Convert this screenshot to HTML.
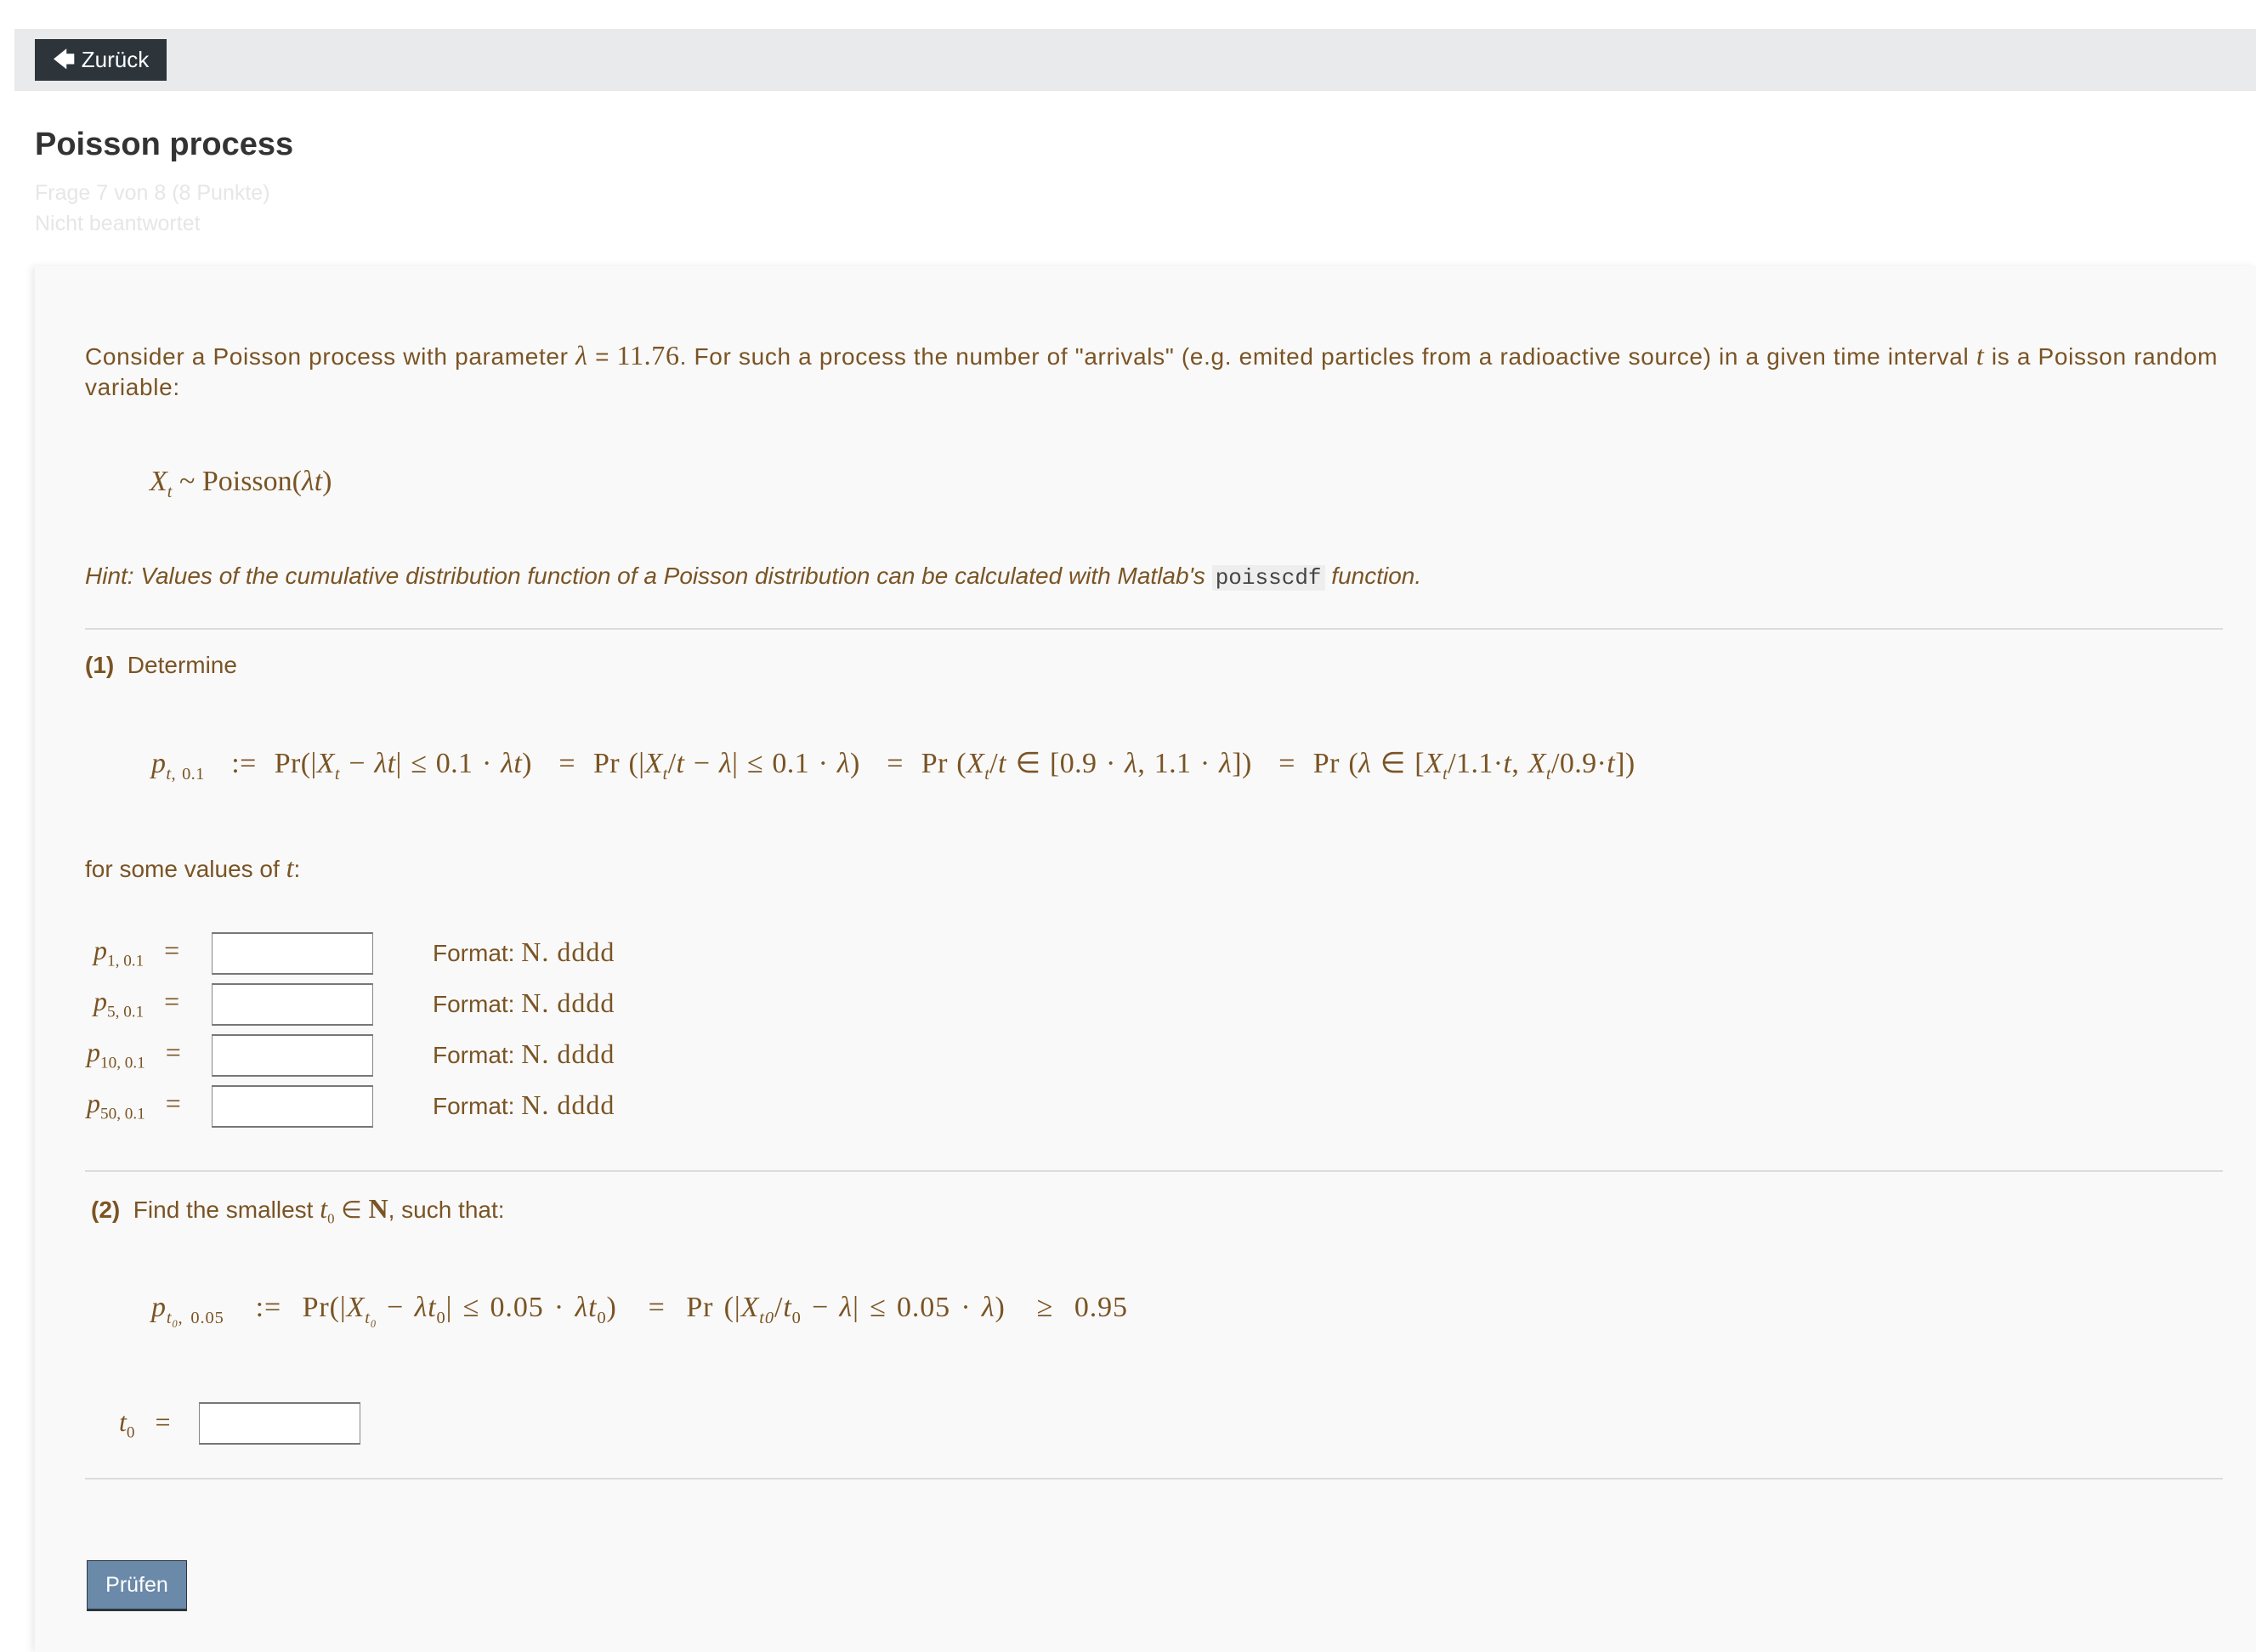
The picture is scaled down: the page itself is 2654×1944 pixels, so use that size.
<!DOCTYPE html>
<html><head><meta charset="utf-8"><style>
body{margin:0;width:2654px;height:1944px;background:#fff;position:relative;overflow:hidden;font-family:"Liberation Sans",sans-serif;color:#7a5424}
.a{position:absolute;white-space:nowrap}
.m{font-family:"Liberation Serif",serif}
i.m{font-style:italic}
.bar{position:absolute;left:17px;top:34px;width:2637px;height:73px;background:#e9eaec}
.btn{position:absolute;left:41px;top:46px;width:155px;height:49px;background:#2d353b;color:#fff;font-size:26px;line-height:49px;text-align:center}
.card{position:absolute;left:41px;top:313px;width:2613px;height:1631px;background:#f9f9f9;box-shadow:-4px 0 8px rgba(0,0,0,.08)}
.hr{position:absolute;left:100px;width:2515px;height:2px;background:#dcdcdc}
.inp{position:absolute;width:188px;height:46px;background:#fff;border:1px solid #888;border-top:2px solid #777;border-bottom:2px solid #777}
.t{font-size:28px}
.f{font-size:34px}
sub{font-size:60%}
</style></head><body>
<div class="bar"></div>
<div class="btn">&#129092; Zurück</div>
<div class="a" style="left:41px;top:149px;font-size:38px;font-weight:bold;color:#333">Poisson process</div>
<div class="a" style="left:41px;top:213px;font-size:25px;color:#e6e6e6">Frage 7 von 8 (8 Punkte)</div>
<div class="a" style="left:41px;top:249px;font-size:25px;color:#e6e6e6">Nicht beantwortet</div>
<div class="card"></div>
<div class="a t" style="left:100px;top:400px;letter-spacing:0.66px">Consider a Poisson process with parameter <i class="m" style="font-size:32px">λ</i> = <span class="m" style="font-size:32px">11.76</span>. For such a process the number of "arrivals" (e.g. emited particles from a radioactive source) in a given time interval <i class="m" style="font-size:32px">t</i> is a Poisson random</div>
<div class="a t" style="left:100px;top:440px;letter-spacing:0.66px">variable:</div>
<div class="a m f" style="left:176px;top:548px"><i>X<sub>t</sub></i> ~ Poisson(<i>λt</i>)</div>
<div class="a t" style="left:100px;top:662px;font-style:italic">Hint: Values of the cumulative distribution function of a Poisson distribution can be calculated with Matlab's <span style="font-style:normal;font-family:'Liberation Mono',monospace;background:#eee;color:#444;padding:0 4px;font-size:26px">poisscdf</span> function.</div>
<div class="hr" style="top:739px"></div>
<div class="a t" style="left:100px;top:767px"><b>(1)</b>&nbsp; Determine</div>
<div class="a m f" style="left:178px;top:878px;letter-spacing:0.4px;word-spacing:1.6px"><i>p<sub>t</sub></i><sub>, 0.1</sub> &nbsp; := &nbsp;Pr(|<i>X<sub>t</sub></i> − <i>λt</i>| ≤ 0.1 · <i>λt</i>) &nbsp; = &nbsp;Pr (|<i>X<sub>t</sub></i>/<i>t</i> − <i>λ</i>| ≤ 0.1 · <i>λ</i>) &nbsp; = &nbsp;Pr (<i>X<sub>t</sub></i>/<i>t</i> ∈ [0.9 · <i>λ</i>, 1.1 · <i>λ</i>]) &nbsp; = &nbsp;Pr (<i>λ</i> ∈ [<i>X<sub>t</sub></i>/1.1·<i>t</i>, <i>X<sub>t</sub></i>/0.9·<i>t</i>])</div>
<div class="a t" style="left:100px;top:1003px">for some values of <i class="m" style="font-size:32px">t</i>:</div>

<div class="a m" style="left:110px;top:1100px;font-size:32px"><i>p</i><sub>1, 0.1</sub> &nbsp;&nbsp;=</div>
<div class="inp" style="left:249px;top:1097px"></div>
<div class="a t" style="left:509px;top:1102px">Format: <span class="m" style="font-size:32px;letter-spacing:1px">N. dddd</span></div>
<div class="a m" style="left:110px;top:1160px;font-size:32px"><i>p</i><sub>5, 0.1</sub> &nbsp;&nbsp;=</div>
<div class="inp" style="left:249px;top:1157px"></div>
<div class="a t" style="left:509px;top:1162px">Format: <span class="m" style="font-size:32px;letter-spacing:1px">N. dddd</span></div>
<div class="a m" style="left:102px;top:1220px;font-size:32px"><i>p</i><sub>10, 0.1</sub> &nbsp;&nbsp;=</div>
<div class="inp" style="left:249px;top:1217px"></div>
<div class="a t" style="left:509px;top:1222px">Format: <span class="m" style="font-size:32px;letter-spacing:1px">N. dddd</span></div>
<div class="a m" style="left:102px;top:1280px;font-size:32px"><i>p</i><sub>50, 0.1</sub> &nbsp;&nbsp;=</div>
<div class="inp" style="left:249px;top:1277px"></div>
<div class="a t" style="left:509px;top:1282px">Format: <span class="m" style="font-size:32px;letter-spacing:1px">N. dddd</span></div>

<div class="hr" style="top:1377px"></div>
<div class="a t" style="left:107px;top:1404px"><b>(2)</b>&nbsp; Find the smallest <i class="m" style="font-size:32px">t</i><sub class="m">0</sub> ∈ <b class="m" style="font-size:32px">N</b>, such that:</div>
<div class="a m f" style="left:178px;top:1520px;letter-spacing:0.9px;word-spacing:2.9px"><i>p<sub>t<sub>0</sub></sub></i><sub>, 0.05</sub> &nbsp; := &nbsp;Pr(|<i>X<sub>t<sub>0</sub></sub></i> − <i>λt</i><sub>0</sub>| ≤ 0.05 · <i>λt</i><sub>0</sub>) &nbsp; = &nbsp;Pr (|<i>X<sub>t0</sub></i>/<i>t</i><sub>0</sub> − <i>λ</i>| ≤ 0.05 · <i>λ</i>) &nbsp; ≥ &nbsp;0.95</div>
<div class="a m" style="left:140px;top:1655px;font-size:32px"><i>t</i><sub>0</sub> &nbsp;&nbsp;=</div>
<div class="inp" style="left:234px;top:1650px"></div>
<div class="hr" style="top:1739px"></div>
<div class="a" style="left:102px;top:1836px;width:116px;height:56px;background:#6b8aaa;border:1px solid #2d353b;border-bottom:3px solid #2d353b;color:#fff;font-size:25px;line-height:56px;text-align:center">Prüfen</div>
</body></html>
